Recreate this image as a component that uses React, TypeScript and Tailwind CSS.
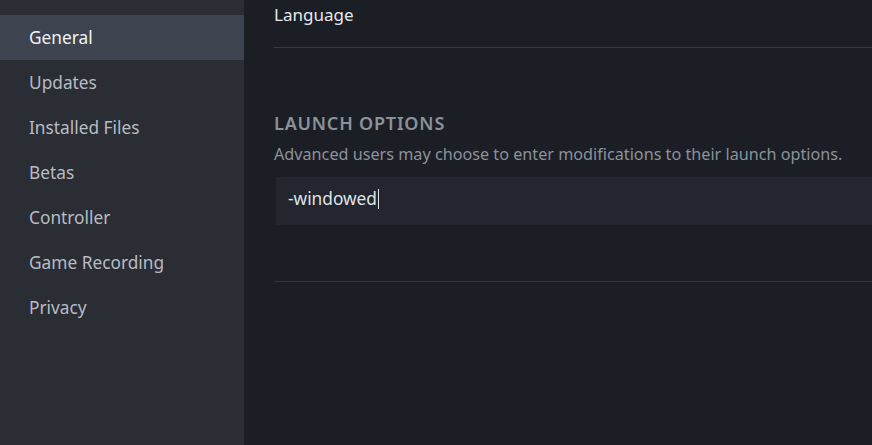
import React from "react";

const items = ["General", "Updates", "Installed Files", "Betas", "Controller", "Game Recording", "Privacy"];

export default function App() {
  return (
    <div className="flex h-[445px] w-[872px] overflow-hidden bg-[#1b1e25]" style={{ fontFamily: '"Noto Sans", "Open Sans", sans-serif' }}>
      <div className="flex w-[244px] shrink-0 flex-col bg-[#2a2d34] pt-[15px]">
        {items.map((it, i) => (
          <div
            key={it}
            className={`flex h-[45px] items-center pl-[29px] text-[17.3px] ${i === 0 ? "bg-[#3d4450] text-[#f1f3f5]" : "text-[#b8bcc2]"}`}
          >
            {it}
          </div>
        ))}
      </div>
      <div className="flex flex-1 flex-col pl-[30px]">
        <div className="flex h-[48px] items-start pt-[2px] text-[17px] text-[#e6e9ec] border-b border-[#343944]">
          Language
        </div>
        <div className="pt-[63px] text-[18px] font-semibold tracking-[0.8px] text-[#8b929a] leading-[24px]">LAUNCH OPTIONS</div>
        <div className="mt-[8px] text-[16.2px] leading-[22px] text-[#8b929a]">
          Advanced users may choose to enter modifications to their launch options.
        </div>
        <div className="ml-[2px] mt-[12px] flex h-[48px] items-center bg-[#23262e] pb-[4px] pl-[12px] text-[17.3px] text-[#dfe3e6]">
          <span>-windowed</span>
          <span className="ml-[1px] inline-block h-[20px] w-[1px] bg-[#dfe3e6]" />
        </div>
        <div className="mt-[56px] border-b border-[#2f333c]" />
      </div>
    </div>
  );
}
